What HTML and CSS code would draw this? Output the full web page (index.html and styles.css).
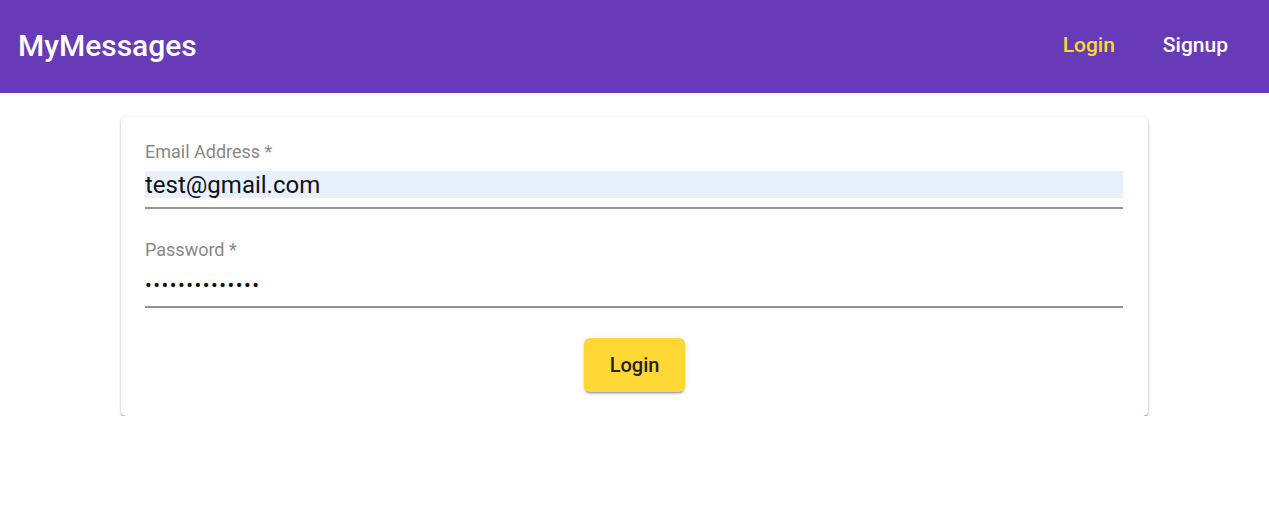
FILE: index.html
```html
<!DOCTYPE html>
<html lang="en">
<head>
<meta charset="utf-8">
<title>MyMessages</title>
<link rel="stylesheet" href="styles.css">
</head>
<body>
<header class="appbar">
  <div class="brand">MyMessages</div>
  <nav class="nav">
    <a class="nav-link active" href="#">Login</a>
    <a class="nav-link" href="#">Signup</a>
  </nav>
</header>
<main class="main">
  <form class="card">
    <div class="field">
      <label class="field-label">Email Address *</label>
      <div class="field-input">
        <span class="input-value autofill">test@gmail.com</span>
      </div>
    </div>
    <div class="field field-last">
      <label class="field-label">Password *</label>
      <div class="field-input">
        <span class="input-value dots">••••••••••••••</span>
      </div>
    </div>
    <div class="actions">
      <button type="button" class="btn">Login</button>
    </div>
  </form>
</main>
</body>
</html>
```
FILE: styles.css
```css
* { box-sizing: border-box; }
body {
  margin: 0;
  font-family: Roboto, "Liberation Sans", Arial, sans-serif;
  background: #fff;
}
.appbar {
  height: 93px;
  background: #673ab7;
  display: flex;
  align-items: center;
  justify-content: space-between;
  padding: 0 17px 3px 18px;
}
.brand {
  color: #fff;
  font-size: 30px;
  font-weight: 500;
}
.nav { display: flex; }
.nav-link {
  color: #fff;
  text-decoration: none;
  font-size: 21px;
  font-weight: 500;
  padding: 8px 24px;
}
.nav-link.active { color: #fdd835; }
.main { padding-top: 24px; }
.card {
  width: 1027px;
  margin: 0 auto;
  background: #fff;
  border-radius: 5px;
  box-shadow: 0 2px 2px -1px rgba(0,0,0,0.3), 0 1px 2px 0 rgba(0,0,0,0.18), 0 1px 4px 0 rgba(0,0,0,0.12);
  padding: 24px 24px 24px 24px;
}
.field {
  width: 978px;
  margin-bottom: 31px;
}
.field-label {
  display: block;
  color: #888;
  font-size: 18px;
  line-height: 22px;
  margin-bottom: 8px;
}
.field-last { margin-bottom: 30px; }
.field-last .field-label { margin-top: -1px; margin-bottom: 9px; }
.field-input {
  border-bottom: 2px solid #949494;
  padding-bottom: 9px;
}
.input-value {
  display: block;
  height: 27px;
  font-size: 24px;
  line-height: 28px;
  color: #111;
}
.autofill { background: #e8f0fe; }
.dots { font-size: 20px; letter-spacing: 1.5px; line-height: 30px; }
.actions {
  display: flex;
  justify-content: center;
}
.btn {
  width: 101px;
  height: 54px;
  border: 0;
  border-radius: 6px;
  background: #fdd835;
  color: #222;
  font-family: Roboto, "Liberation Sans", Arial, sans-serif;
  font-size: 20px;
  font-weight: 500;
  box-shadow: 0 3px 1px -2px rgba(0,0,0,0.2), 0 2px 2px 0 rgba(0,0,0,0.14), 0 1px 5px 0 rgba(0,0,0,0.12);
}
```
